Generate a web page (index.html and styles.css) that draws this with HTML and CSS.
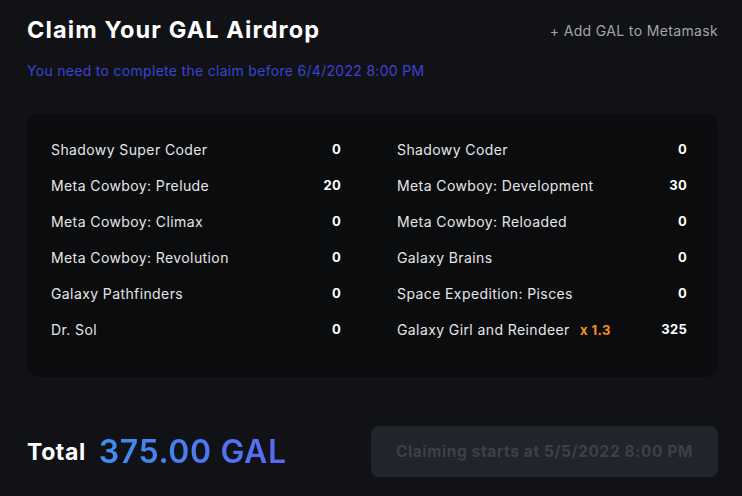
FILE: index.html
```html
<!DOCTYPE html>
<html lang="en">

<head>
    <meta charset="UTF-8">
    <title>Claim Your GAL Airdrop</title>
    <link rel="stylesheet" href="styles.css">
</head>

<body>
    <section class="claimbox">
        <div class="claimheader">
            <h1 class="headertext">Claim Your GAL Airdrop</h1>
            <a class="addtoken" href="#">+ Add GAL to Metamask</a>
        </div>
        <p class="deadline">You need to complete the claim before 6/4/2022 8:00 PM</p>

        <div class="campaigns">
            <div class="row"><span class="name">Shadowy Super Coder</span><span class="amount">0</span></div>
            <div class="row"><span class="name">Shadowy Coder</span><span class="amount">0</span></div>
            <div class="row"><span class="name">Meta Cowboy: Prelude</span><span class="amount">20</span></div>
            <div class="row"><span class="name">Meta Cowboy: Development</span><span class="amount">30</span></div>
            <div class="row"><span class="name">Meta Cowboy: Climax</span><span class="amount">0</span></div>
            <div class="row"><span class="name">Meta Cowboy: Reloaded</span><span class="amount">0</span></div>
            <div class="row"><span class="name">Meta Cowboy: Revolution</span><span class="amount">0</span></div>
            <div class="row"><span class="name">Galaxy Brains</span><span class="amount">0</span></div>
            <div class="row"><span class="name">Galaxy Pathfinders</span><span class="amount">0</span></div>
            <div class="row"><span class="name">Space Expedition: Pisces</span><span class="amount">0</span></div>
            <div class="row"><span class="name">Dr. Sol</span><span class="amount">0</span></div>
            <div class="row"><span class="name">Galaxy Girl and Reindeer <b class="boost">x 1.3</b></span><span class="amount">325</span></div>
        </div>

        <div class="claimfooter">
            <div class="total">
                <span class="totallabel">Total</span>
                <span class="totalvalue">375.00 GAL</span>
            </div>
            <button class="claimbutton" disabled>Claiming starts at 5/5/2022 8:00 PM</button>
        </div>
    </section>
</body>

</html>
```

FILE: styles.css
```css
body {
    margin: 0;
    background-color: #111216;
    font-family: 'Inter', 'Open Sans', sans-serif;
    color: #e8e8ea;
}

.claimbox {
    padding: 16px 24px 0 27px;
}

.claimheader {
    display: flex;
    justify-content: space-between;
    align-items: center;
}

.headertext {
    margin: 0;
    font-size: 23.5px;
    line-height: 28px;
    font-weight: 700;
    letter-spacing: 1.1px;
    color: #ffffff;
}

.addtoken {
    font-size: 14px;
    letter-spacing: 0.35px;
    color: #a3a4ab;
    text-decoration: none;
}

.deadline {
    margin: 17px 0 0;
    font-size: 14px;
    line-height: 20px;
    letter-spacing: 0.3px;
    color: #3d42d4;
}

.campaigns {
    display: grid;
    grid-template-columns: 290px 290px;
    column-gap: 56px;
    margin-top: 33px;
    padding: 17px 31px 30px 24px;
    background-color: #0b0c0e;
    border-radius: 12px;
}

.row {
    display: flex;
    justify-content: space-between;
    align-items: center;
    height: 36px;
    font-size: 14px;
}

.name {
    letter-spacing: 0.4px;
    color: #e6e6e8;
}

.amount {
    font-weight: 700;
    font-size: 13px;
    letter-spacing: 0.3px;
    color: #ffffff;
}

.boost {
    margin-left: 6px;
    font-size: 13px;
    color: #f7931a;
}

.claimfooter {
    display: flex;
    justify-content: space-between;
    align-items: center;
    margin-top: 49px;
}

.total {
    display: flex;
    align-items: center;
    gap: 13px;
}

.totallabel {
    font-size: 23px;
    font-weight: 700;
    letter-spacing: 0.6px;
    color: #ffffff;
}

.totalvalue {
    font-size: 32px;
    font-weight: 600;
    letter-spacing: 0.6px;
    background: linear-gradient(90deg, #3c90f2, #5a67f4);
    -webkit-background-clip: text;
    background-clip: text;
    color: transparent;
}

.claimbutton {
    width: 347px;
    height: 51px;
    border: none;
    border-radius: 8px;
    background-color: #22242b;
    color: #3e4049;
    font-family: inherit;
    font-size: 15.5px;
    font-weight: 700;
    letter-spacing: 0.6px;
}
```
